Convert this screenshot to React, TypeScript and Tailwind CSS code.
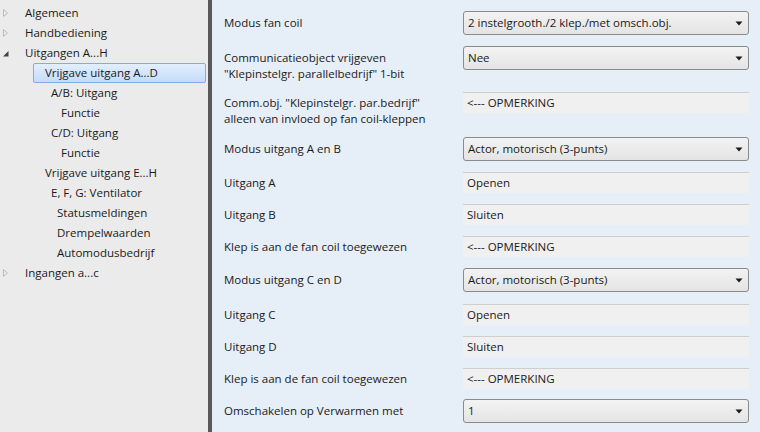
import React from "react";

const font = { fontFamily: '"Open Sans", "Noto Sans", sans-serif' };

function Collapsed() {
  return (
    <svg width="8" height="10" viewBox="0 0 8 10" className="shrink-0">
      <path d="M1.5 1.5 L5.5 5 L1.5 8.5 Z" fill="none" stroke="#bcbcbc" strokeWidth="1" />
    </svg>
  );
}
function Expanded() {
  return (
    <svg width="8" height="10" viewBox="0 0 8 10" className="shrink-0">
      <path d="M6.5 3 L6.5 8.5 L1 8.5 Z" fill="#404040" />
    </svg>
  );
}

type TreeItem = { label: string; indent: number; icon?: "c" | "e"; selected?: boolean };
const tree: TreeItem[] = [
  { label: "Algemeen", indent: 25, icon: "c" },
  { label: "Handbediening", indent: 25, icon: "c" },
  { label: "Uitgangen A...H", indent: 25, icon: "e" },
  { label: "Vrijgave uitgang A...D", indent: 45, selected: true },
  { label: "A/B: Uitgang", indent: 51 },
  { label: "Functie", indent: 61 },
  { label: "C/D: Uitgang", indent: 51 },
  { label: "Functie", indent: 61 },
  { label: "Vrijgave uitgang E...H", indent: 45 },
  { label: "E, F, G: Ventilator", indent: 51 },
  { label: "Statusmeldingen", indent: 57 },
  { label: "Drempelwaarden", indent: 57 },
  { label: "Automodusbedrijf", indent: 57 },
  { label: "Ingangen a...c", indent: 25, icon: "c" },
];

function Sidebar() {
  return (
    <div className="w-[208px] shrink-0 bg-[#ebebeb] pt-[3px] text-[11.5px] text-[#1a1a1a]">
      {tree.map((t, i) => (
        <div key={i} className="relative h-[20px] flex items-center">
          {t.icon && (
            <div className="absolute left-[2px] top-[5px]">
              {t.icon === "c" ? <Collapsed /> : <Expanded />}
            </div>
          )}
          {t.selected && (
            <div className="absolute left-[33px] right-[2px] top-0 bottom-0 rounded-[2px] border border-[#84acdd] bg-gradient-to-b from-[#e3effd] to-[#c4dcfa]" />
          )}
          <span className="relative" style={{ paddingLeft: t.indent }}>
            {t.label}
          </span>
        </div>
      ))}
    </div>
  );
}

function Dropdown({ value }: { value: string }) {
  return (
    <div className="flex h-[24px] w-[286px] shrink-0 items-center justify-between rounded-[3px] border border-[#8a8a8a] bg-gradient-to-b from-[#f3f3f3] to-[#e4e4e4] pl-[4px] pr-[5px]">
      <span>{value}</span>
      <svg width="8" height="5" viewBox="0 0 8 5">
        <path d="M0.5 0.5 L7.5 0.5 L4 4.5 Z" fill="#1a1a1a" />
      </svg>
    </div>
  );
}

function Readonly({ value }: { value: string }) {
  return (
    <div className="flex h-[21px] w-[286px] shrink-0 items-center border-t border-[#cfcfcf] bg-[#f0f0f0] pl-[4px]">
      {value}
    </div>
  );
}

type Row = { label: string[]; kind: "d" | "r"; value: string; mt: string };
const rows: Row[] = [
  { label: ["Modus fan coil"], kind: "d", value: "2 instelgrooth./2 klep./met omsch.obj.", mt: "mt-0" },
  { label: ["Communicatieobject vrijgeven", '"Klepinstelgr. parallelbedrijf" 1-bit'], kind: "d", value: "Nee", mt: "mt-[11px]" },
  { label: ['Comm.obj. "Klepinstelgr. par.bedrijf"', "alleen van invloed op fan coil-kleppen"], kind: "r", value: "<--- OPMERKING", mt: "mt-[10px]" },
  { label: ["Modus uitgang A en B"], kind: "d", value: "Actor, motorisch (3-punts)", mt: "mt-[10px]" },
  { label: ["Uitgang A"], kind: "r", value: "Openen", mt: "mt-[11px]" },
  { label: ["Uitgang B"], kind: "r", value: "Sluiten", mt: "mt-[11px]" },
  { label: ["Klep is aan de fan coil toegewezen"], kind: "r", value: "<--- OPMERKING", mt: "mt-[11px]" },
  { label: ["Modus uitgang C en D"], kind: "d", value: "Actor, motorisch (3-punts)", mt: "mt-[11px]" },
  { label: ["Uitgang C"], kind: "r", value: "Openen", mt: "mt-[12px]" },
  { label: ["Uitgang D"], kind: "r", value: "Sluiten", mt: "mt-[11px]" },
  { label: ["Klep is aan de fan coil toegewezen"], kind: "r", value: "<--- OPMERKING", mt: "mt-[11px]" },
  { label: ["Omschakelen op Verwarmen met"], kind: "d", value: "1", mt: "mt-[10px]" },
];

function Content() {
  return (
    <div className="flex-1 bg-[#e6eef7] pl-[12px] pt-[11px] text-[11.5px] text-[#1a1a1a]">
      <div className="flex flex-col">
        {rows.map((r, i) => {
          const two = r.label.length > 1;
          return (
            <div key={i} className={`${r.mt} flex ${two ? "items-start" : "items-center"}`}>
              <div
                className={`w-[239px] shrink-0 leading-[16px] ${two ? (r.kind === "d" ? "pt-[4px]" : "pt-[3px]") : ""}`}
              >
                {r.label.map((l, j) => (
                  <div key={j}>{l}</div>
                ))}
              </div>
              {r.kind === "d" ? <Dropdown value={r.value} /> : <Readonly value={r.value} />}
            </div>
          );
        })}
      </div>
    </div>
  );
}

export default function App() {
  return (
    <div className="flex h-[432px] w-[760px] overflow-hidden" style={font}>
      <Sidebar />
      <div className="w-[4px] shrink-0 bg-[#595959]" />
      <Content />
    </div>
  );
}
